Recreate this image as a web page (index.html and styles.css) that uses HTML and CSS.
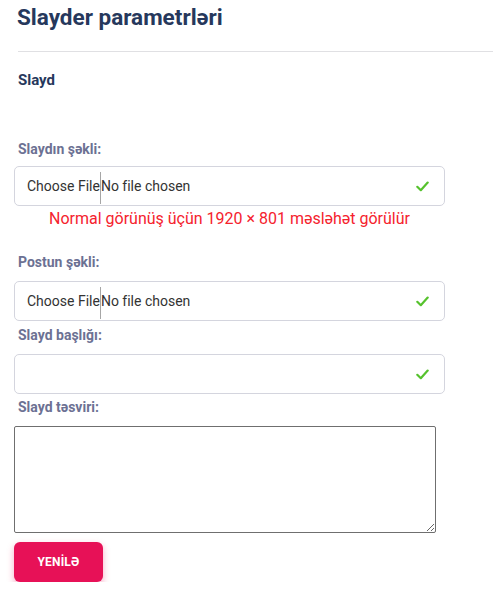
FILE: index.html
```html
<!DOCTYPE html>
<html lang="az">
<head>
<meta charset="utf-8">
<title>Slayder parametrləri</title>
<link rel="stylesheet" href="styles.css">
</head>
<body>
<div class="page">
  <h1 class="title">Slayder parametrləri</h1>
  <hr class="divider">
  <h2 class="section">Slayd</h2>
  <form class="form">
    <label class="label label-first">Slaydın şəkli:</label>
    <div class="file-input">
      <span class="file-btn">Choose File</span><span class="file-name">No file chosen</span>
      <svg class="check" width="13" height="11" viewBox="0 0 13 11"><path d="M1.3 5.8 L4.8 9.2 L11.7 1.6" fill="none" stroke="#56c22d" stroke-width="2.2" stroke-linecap="round" stroke-linejoin="round"/></svg>
    </div>
    <p class="hint">Normal görünüş üçün 1920 × 801 məsləhət görülür</p>

    <label class="label label-post">Postun şəkli:</label>
    <div class="file-input file-input-gap">
      <span class="file-btn">Choose File</span><span class="file-name">No file chosen</span>
      <svg class="check" width="13" height="11" viewBox="0 0 13 11"><path d="M1.3 5.8 L4.8 9.2 L11.7 1.6" fill="none" stroke="#56c22d" stroke-width="2.2" stroke-linecap="round" stroke-linejoin="round"/></svg>
    </div>

    <label class="label label-tight">Slayd başlığı:</label>
    <div class="file-input file-input-gap">
      <span class="file-name"></span>
      <svg class="check" width="13" height="11" viewBox="0 0 13 11"><path d="M1.3 5.8 L4.8 9.2 L11.7 1.6" fill="none" stroke="#56c22d" stroke-width="2.2" stroke-linecap="round" stroke-linejoin="round"/></svg>
    </div>

    <label class="label label-tight2">Slayd təsviri:</label>
    <textarea class="textarea"></textarea>

    <button type="button" class="btn">YENİLƏ</button>
  </form>
</div>
</body>
</html>
```
FILE: styles.css
```css
* { box-sizing: border-box; }
html, body { margin: 0; padding: 0; background: #fff; }
body { font-family: Roboto, "Noto Sans", Arial, sans-serif; }

.page {
  padding-left: 14px;
}

.title {
  margin: 4px 0 0 3px;
  font-size: 22.5px;
  line-height: 27px;
  font-weight: 700;
  color: #26385c;
}

.divider {
  margin: 20px 0 0 4px;
  border: 0;
  border-top: 1px solid #e0e0e3;
  height: 0;
}

.section {
  margin: 20px 0 0 4px;
  font-size: 15px;
  line-height: 17px;
  font-weight: 700;
  color: #26385c;
}

.form { display: block; }

.label {
  display: block;
  margin-left: 4px;
  font-size: 14px;
  line-height: 16px;
  font-weight: 700;
  color: #6c7193;
}
.label-first { margin-top: 52px; }
.label-post { margin-top: 26px; }
.label-tight { margin-top: 6px; }
.label-tight2 { margin-top: 5px; }

.file-input {
  margin-top: 9px;
  width: 431px;
  height: 40px;
  border: 1px solid #d4d5de;
  border-radius: 5px;
  display: flex;
  align-items: center;
  padding: 0 14px 0 12px;
  font-size: 14px;
  line-height: 38px;
  color: #333;
}
.file-input-gap { margin-top: 11px; }

.file-btn {
  align-self: stretch;
  padding-right: 1px;
  background: linear-gradient(#a6a6a6, #a6a6a6) right 5px / 1px 32px no-repeat;
}
.file-name {
  flex: 1;
}
.check { flex: none; margin-right: 1px; }

.hint {
  margin: 3px 0 0 0;
  width: 431px;
  text-align: center;
  font-size: 16px;
  line-height: 19px;
  color: #f5222d;
}

.textarea {
  display: block;
  margin-top: 11px;
  width: 422px;
  height: 107px;
  border: 1px solid #6f6f6f;
  border-radius: 2px;
  padding: 2px;
  font-family: inherit;
  resize: both;
}

.btn {
  display: block;
  margin-top: 9px;
  width: 89px;
  height: 40px;
  border: 0;
  border-radius: 6px;
  background: #e71157;
  color: #fff;
  font-family: inherit;
  font-size: 12px;
  font-weight: 700;
  letter-spacing: 0.2px;
  box-shadow: 0 3px 7px rgba(231, 17, 87, 0.35);
  padding: 0;
}
```
